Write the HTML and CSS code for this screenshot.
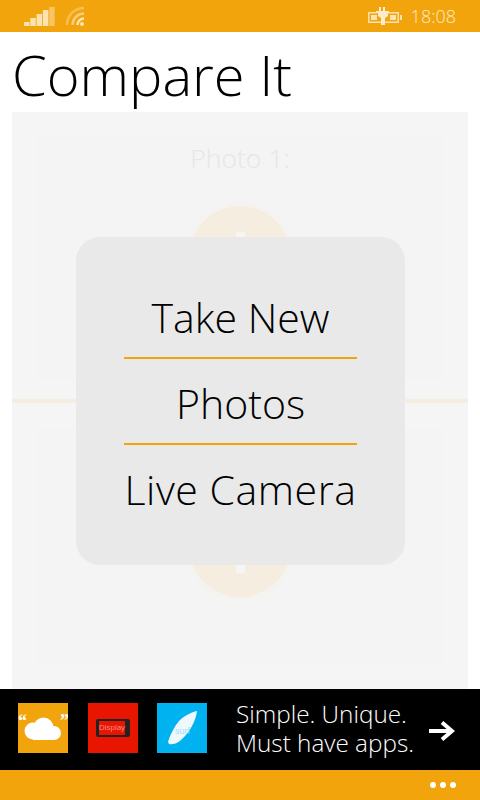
FILE: index.html
```html
<!DOCTYPE html>
<html lang="en">
<head>
<meta charset="utf-8">
<title>Compare It</title>
<link rel="stylesheet" href="styles.css">
</head>
<body>
<div class="app">
  <header class="status">
    <div class="status-left">
      <svg class="ico-signal" width="31" height="19" viewBox="0 0 31 19">
        <rect x="0" y="15" width="5.500" height="4" fill="#fde3b0"/>
        <rect x="6.300" y="11" width="5.500" height="8" fill="#fde3b0"/>
        <rect x="12.600" y="7" width="5.500" height="12" fill="#fde3b0"/>
        <rect x="18.900" y="3" width="5.500" height="16" fill="#fde3b0"/>
        <rect x="25.200" y="0" width="5.500" height="19" fill="#f7c468"/>
      </svg>
      <svg class="ico-wifi" width="22" height="22" viewBox="0 0 22 22" fill="none">
        <circle cx="16" cy="19" r="2" fill="#fde3b0"/>
        <path d="M11.500 20a6.500 6.500 0 0 1 6.500-6.500" stroke="#fde3b0" stroke-width="2.500"/>
        <path d="M6.500 20a11.500 11.500 0 0 1 11.500-11.500" stroke="#f9cc7e" stroke-width="2.500"/>
        <path d="M1 20a17 17 0 0 1 17-17" stroke="#f6bd58" stroke-width="2.500"/>
      </svg>
    </div>
    <div class="status-right">
      <svg class="ico-batt" width="34" height="18" viewBox="0 0 34 18">
        <path d="M0 5h9v1.500H1.500v8H13V16H0z" fill="#fde3b0"/>
        <rect x="3" y="8" width="6" height="5" fill="#fde3b0"/>
        <path d="M20 5h11v11H16v-1.500h13.500v-8H20z" fill="#fde3b0"/>
        <rect x="22" y="8" width="6" height="5" fill="#fde3b0"/>
        <rect x="32" y="8" width="2" height="5" fill="#fde3b0"/>
        <path d="M11 0h2v4h2V0h2v4h4v2h-1v3l-3 2v7h-4v-7l-3-2V6H8V4h3z" fill="#fdeccb"/>
      </svg>
      <span class="clock">18:08</span>
    </div>
  </header>

  <h1 class="title">Compare It</h1>

  <main class="stage">
    <section class="slot slot-top">
      <div class="slot-label">Photo 1:</div>
      <div class="disc"><span class="disc-mark"></span></div>
    </section>
    <div class="divider"></div>
    <section class="slot slot-bottom">
      <div class="disc"><span class="disc-mark"></span></div>
    </section>
    <nav class="popup">
      <div class="popup-item">Take New</div>
      <div class="popup-item">Photos</div>
      <div class="popup-item popup-item-wide">Live Camera</div>
    </nav>
  </main>

  <aside class="ad">
    <div class="tile tile-cloud">
      <svg width="50" height="50" viewBox="0 0 50 50">
        <g fill="#fff">
          <circle cx="15" cy="28" r="8.500"/>
          <circle cx="25.500" cy="24.500" r="10"/>
          <circle cx="36" cy="30" r="7"/>
          <rect x="15" y="28" width="21" height="9"/>
        </g>
        <text class="quote" x="0" y="24">“</text>
        <text class="quote" x="42" y="24">”</text>
      </svg>
    </div>
    <div class="tile tile-display">
      <div class="phone"><span class="phone-text">Display</span></div>
    </div>
    <div class="tile tile-surf">
      <svg width="50" height="50" viewBox="0 0 50 50">
        <path d="M40 8C32 10 26 14 22 18 17 24 13 32 11 39L12 41C18 42 22 39 25 36 32 30 39 18 40 8z" fill="#eef9fe"/>
        <text class="surf-text" x="18" y="31">surf</text>
      </svg>
    </div>
    <div class="ad-copy">Simple. Unique.<br>Must have apps.</div>
    <svg class="ad-arrow" width="26" height="20" viewBox="0 0 26 20" fill="none">
      <path d="M0 10h23M13 1.500l10 8.500-10 8.500" stroke="#fff" stroke-width="4"/>
    </svg>
  </aside>

  <footer class="appbar">
    <span class="dot"></span><span class="dot"></span><span class="dot"></span>
  </footer>
</div>
</body>
</html>
```
FILE: styles.css
```css
* { box-sizing: border-box; }
html, body { margin: 0; padding: 0; }
body { background: #fff; font-family: "Open Sans", "Liberation Sans", sans-serif; }
.app { width: 480px; height: 800px; display: flex; flex-direction: column; overflow: hidden; }

.status { height: 32px; flex: none; background: #f2a40c; display: flex; justify-content: space-between; align-items: center; padding: 0 24px; }
.status-left { display: flex; align-items: flex-start; gap: 11px; height: 32px; padding-top: 5px; }
.ico-signal { display: block; margin-top: 2px; }
.ico-wifi { display: block; }
.status-right { display: flex; align-items: center; gap: 9px; }
.ico-batt { display: block; }
.clock { font-size: 18px; font-weight: 300; color: #feeacb; line-height: 32px; }

.title { height: 80px; flex: none; margin: 0; padding: 0 0 0 12px; font-size: 56px; line-height: 84px; font-weight: 300; color: #000; white-space: nowrap; }

.stage { position: relative; flex: none; height: 577px; margin: 0 12px; background: #f5f5f5; padding: 24px; display: flex; flex-direction: column; }
.slot { background: #f4f4f4; height: 244px; flex: none; display: flex; flex-direction: column; align-items: center; overflow: hidden; }
.slot-bottom { height: 237px; justify-content: flex-end; padding-bottom: 68px; }
.slot-label { font-size: 26.500px; line-height: 44px; font-weight: 300; color: #e6e6e6; }
.disc { width: 102px; height: 102px; border-radius: 50%; background: #f5eddf; box-shadow: 0 0 0 4px #f4f3f0; position: relative; margin-top: 26px; flex: none; }
.slot-bottom .disc { margin-top: 0; }
.disc-mark { position: absolute; left: 47px; top: 26px; width: 9px; height: 8px; background: #f5f5f5; }
.slot-bottom .disc-mark { top: auto; bottom: 24px; }

.divider { height: 4px; flex: none; margin: 19px -24px 25px; background: #f5eddf; }

.popup { position: absolute; left: 64px; top: 125px; width: 329px; height: 328px; border-radius: 24px; background: #e9e9e9; padding: 36px 48px 0; display: flex; flex-direction: column; }
.popup-item { height: 86px; flex: none; display: flex; align-items: center; justify-content: center; padding-top: 4px; font-size: 41px; font-weight: 300; color: #000; white-space: nowrap; border-bottom: 2px solid #f2a40c; }
.popup-item:last-child { border-bottom: 0; padding-top: 2px; }
.popup-item-wide { letter-spacing: 0.55px; }

.ad { height: 81px; flex: none; background: #000; display: flex; align-items: center; padding: 0 0 3px 18px; }
.tile { width: 50px; height: 50px; flex: none; margin-right: 19px; display: flex; align-items: center; justify-content: center; }
.tile svg { display: block; }
.tile-cloud { background: #f2a40c; margin-right: 20px; }
.tile-display { background: #e81500; }
.tile-surf { background: #00b2f0; margin-right: 29px; }
.quote { font-family: "Liberation Serif", serif; font-size: 18px; font-weight: 700; fill: #fff; }
.phone { width: 34px; height: 18px; background: #e81500; border: solid #222; border-width: 2px 5px 2px 3px; border-radius: 2px; display: flex; align-items: center; justify-content: center; }
.phone-text { font-family: "Liberation Sans", sans-serif; font-size: 8px; color: #f98a80; line-height: 14px; }
.surf-text { font-family: "Liberation Sans", sans-serif; font-size: 9px; fill: #9fdcf6; }
.ad-copy { font-size: 24.300px; line-height: 29px; font-weight: 300; color: #fff; white-space: nowrap; }
.ad-arrow { margin: 6px 25px 0 auto; flex: none; }

.appbar { flex: 1; background: #f2a40c; display: flex; justify-content: flex-end; align-items: center; gap: 4px; padding: 0 24px 0 0; }
.dot { width: 6px; height: 6px; border-radius: 50%; background: #fff; }
```
